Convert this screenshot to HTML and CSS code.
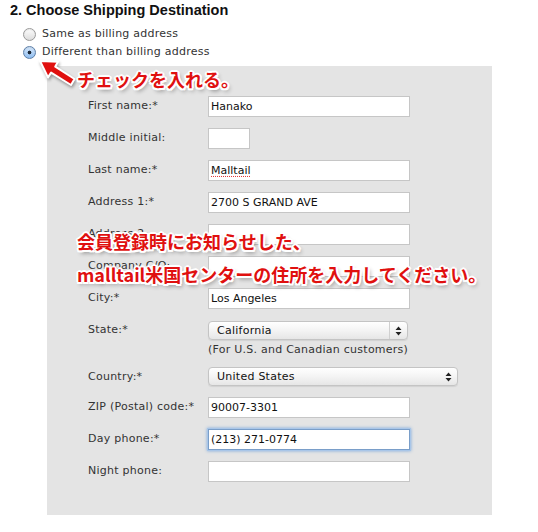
FILE: index.html
```html
<!DOCTYPE html>
<html lang="ja">
<head>
  <meta charset="UTF-8" />
  <title>Choose Shipping Destination</title>
  <link rel="stylesheet" href="styles.css">
</head>
<body>

<div class="page">
  <h2 class="step-title">2. Choose Shipping Destination</h2>

  <div class="choices">
    <label class="choice"><input type="radio" name="dest"> Same as billing address</label>
    <label class="choice"><input type="radio" name="dest" checked> Different than billing address</label>
  </div>

  <!-- Shipping address form -->
  <div class="panel">
    <div class="field">
      <label>First name:*</label>
      <input type="text" class="text" value="Hanako">
    </div>
    <div class="field">
      <label>Middle initial:</label>
      <input type="text" class="text short" value="">
    </div>
    <div class="field">
      <label>Last name:*</label>
      <input type="text" class="text spell" value="Malltail">
    </div>
    <div class="field">
      <label>Address 1:*</label>
      <input type="text" class="text" value="2700 S GRAND AVE">
    </div>
    <div class="field">
      <label>Address 2:</label>
      <input type="text" class="text" value="">
    </div>
    <div class="field">
      <label>Company C/O:</label>
      <input type="text" class="text" value="">
    </div>
    <div class="field">
      <label>City:*</label>
      <input type="text" class="text" value="Los Angeles">
    </div>
    <div class="field field-state">
      <label>State:*</label>
      <div>
        <div class="select state">
          <span>California</span>
          <span class="arrows divided">
            <svg width="7" height="10" viewBox="0 0 7 10"><path d="M3.5 0.5 L6.5 4 L0.5 4 Z M0.5 6 L6.5 6 L3.5 9.5 Z" fill="#222"/></svg>
          </span>
        </div>
        <div class="note">(For U.S. and Canadian customers)</div>
      </div>
    </div>
    <div class="field">
      <label>Country:*</label>
      <div class="select country">
        <span>United States</span>
        <span class="arrows">
          <svg width="7" height="10" viewBox="0 0 7 10"><path d="M3.5 0.5 L6.5 4 L0.5 4 Z M0.5 6 L6.5 6 L3.5 9.5 Z" fill="#222"/></svg>
        </span>
      </div>
    </div>
    <div class="field">
      <label>ZIP (Postal) code:*</label>
      <input type="text" class="text" value="90007-3301">
    </div>
    <div class="field">
      <label>Day phone:*</label>
      <input type="text" class="text focused" value="(213) 271-0774">
    </div>
    <div class="field">
      <label>Night phone:</label>
      <input type="text" class="text" value="">
    </div>
  </div>

  <!-- Annotations -->
  <svg class="arrow" width="90" height="40" viewBox="30 55 90 40">
    <polygon points="40,61 58,61.8 55.3,66.6 74.5,79 71,85 51.1,72.6 48,77.4"
             fill="#e0100f" stroke="#fff" stroke-width="2" stroke-linejoin="round"/>
  </svg>
  <div class="note-red note-check">チェックを入れる。</div>
  <div class="note-red note-address">会員登録時にお知らせした、<br>malltail米国センターの住所を入力してください。</div>
</div>

</body>
</html>
```

FILE: styles.css
```css
* {
  margin: 0;
  padding: 0;
  box-sizing: border-box;
}

body {
  font-family: 'DejaVu Sans', Verdana, sans-serif;
  font-size: 11px;
  letter-spacing: 0.25px;
  color: #333;
  background-color: #fff;
}

.page {
  position: relative;
  width: 538px;
  height: 532px;
}

.step-title {
  font-family: 'Liberation Sans', Arial, sans-serif;
  font-size: 14.5px;
  font-weight: bold;
  line-height: 20px;
  letter-spacing: 0;
  color: #111;
  padding-left: 10px;
}

.choices {
  margin-top: 5px;
  padding-left: 23px;
}

.choice {
  display: flex;
  align-items: center;
  gap: 6px;
  height: 18px;
  line-height: 18px;
  color: #333;
}

.choice input[type="radio"] {
  appearance: none;
  -webkit-appearance: none;
  width: 13px;
  height: 13px;
  border-radius: 50%;
  border: 1px solid #9a9a9a;
  background: linear-gradient(#fdfdfd, #dcdcdc);
  box-shadow: inset 0 1px 1px rgba(0, 0, 0, 0.08);
  position: relative;
}

.choice input[type="radio"]:checked {
  border-color: #5d7fa8;
  background: radial-gradient(circle, #1d2a3a 0, #1d2a3a 1.6px, transparent 2.2px),
              linear-gradient(#d6e8fb, #8fbdf0);
}

.panel {
  margin-top: 5px;
  margin-left: 47px;
  width: 445px;
  background-color: #e4e4e4;
  padding: 30px 0 22px 41px;
}

.field {
  display: grid;
  grid-template-columns: 120px auto;
  margin-bottom: 11px;
}

.field label {
  padding-top: 2px;
  line-height: 16px;
  color: #333;
}

.text {
  width: 202px;
  height: 21px;
  border: 1px solid #c6c6c6;
  background-color: #fff;
  font-family: 'DejaVu Sans', Verdana, sans-serif;
  font-size: 11px;
  color: #111;
  padding: 0 2px;
  outline: none;
}

.text.short {
  width: 42px;
}

.text.spell {
  text-decoration: underline dotted #e23b3b;
  text-underline-offset: 2px;
}

.text.focused {
  border-color: #7a9ec9;
  box-shadow: 0 0 0 1px #a9c6e8, 0 0 3px 1px #7fa9dd;
}

.select {
  display: flex;
  align-items: center;
  justify-content: space-between;
  height: 19px;
  border: 1px solid #c4c4c4;
  border-radius: 4px;
  background: linear-gradient(#ffffff, #f4f4f4 50%, #e6e6e6);
  box-shadow: 0 1px 1px rgba(0, 0, 0, 0.08);
  padding-left: 8px;
  color: #111;
}

.select.state {
  width: 200px;
  margin-top: 1px;
}

.select.country {
  width: 250px;
}

.arrows {
  display: flex;
  align-items: center;
  justify-content: center;
  width: 18px;
  height: 100%;
}

.arrows.divided {
  border-left: 1px solid #d0d0d0;
}

.field-state {
  margin-bottom: 9px;
}

.field-state .note {
  margin-top: 2px;
  line-height: 16px;
  color: #333;
}

/* Red callouts over the form */
.arrow {
  position: absolute;
  left: 30px;
  top: 55px;
  filter: drop-shadow(1px 2px 1.5px rgba(0, 0, 0, 0.35));
}

.note-red {
  position: absolute;
  font-family: 'Noto Sans CJK JP', 'Noto Sans', sans-serif;
  font-weight: bold;
  font-size: 18px;
  color: #e0100f;
  white-space: nowrap;
  letter-spacing: 0;
  text-shadow:
    -2px 0 #fff, 2px 0 #fff, 0 -2px #fff, 0 2px #fff,
    -1.5px -1.5px #fff, 1.5px -1.5px #fff, -1.5px 1.5px #fff, 1.5px 1.5px #fff,
    2px 3px 4px rgba(0, 0, 0, 0.45);
}

.note-check {
  left: 77px;
  top: 67px;
  line-height: 24px;
}

.note-address {
  left: 77px;
  top: 225px;
  line-height: 33px;
}
```
